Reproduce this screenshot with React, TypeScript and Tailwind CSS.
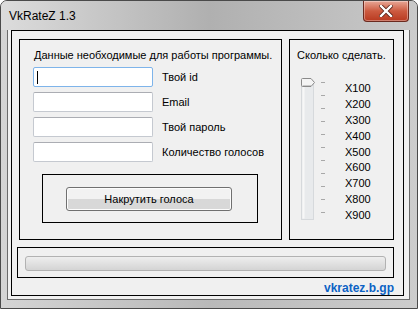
import React from 'react';

const ui = "font-['Liberation_Sans',Arial,sans-serif]";

const fields = ['Твой id', 'Email', 'Твой пароль', 'Количество голосов'];
const amounts = ['X100', 'X200', 'X300', 'X400', 'X500', 'X600', 'X700', 'X800', 'X900'];

const TextBox: React.FC<{ focused?: boolean }> = ({ focused }) => (
  <div
    className={
      'relative w-[120px] h-[20px] bg-white border rounded-[2px] ' +
      (focused ? 'border-[#7eb4ea] bg-[#fcfeff]' : 'border-[#c5c9d0] border-t-[#abadb3]')
    }
  >
    {focused && <div className="absolute left-[3px] top-[3px] w-px h-[13px] bg-black" />}
  </div>
);

const Slider: React.FC = () => (
  <svg width="28" height="144" viewBox="0 0 28 144" className="shrink-0">
    <rect x="0.5" y="3.5" width="12" height="138" fill="#e8eaec" stroke="#d6d9dc" />
    <rect x="1.5" y="4.5" width="2" height="136" fill="#f7f7f7" />
    <path d="M0.5 1.5 Q0.5 0.5 1.5 0.5 H10 L13.5 4.5 L10 8.5 H1.5 Q0.5 8.5 0.5 7.5 Z" fill="#f4f4f4" stroke="#8a8a8a" />
    <path d="M1.5 7.5 H10" stroke="#c9c9c9" />
    {[4, 17, 30, 43, 56, 69, 82, 95, 108, 121, 134].map((y) => (
      <rect key={y} x="20" y={y} width="4" height="1" fill="#a8a8a8" />
    ))}
  </svg>
);

const App: React.FC = () => {
  return (
    <div className={`w-[418px] h-[309px] bg-white ${ui}`}>
      <div className="w-full h-full flex flex-col rounded-t-[7px] border border-[#4a4a4a] bg-gradient-to-r from-[#d4d4d4] via-[#b9b9b9] to-[#cdcdcd] overflow-hidden">
        {/* title bar */}
        <div className="h-[29px] shrink-0 flex items-start justify-between bg-gradient-to-r from-[#dcdcdc] via-[#b0b0b0] to-[#c9c9c9]">
          <span className="pl-[8px] pt-[8px] text-[12px] leading-[14px] text-black">VkRateZ 1.3</span>
          <div className="mr-[8px] w-[46px] h-[21px] flex items-center justify-center rounded-b-[4px] border border-t-0 border-[#6b2a1f] bg-gradient-to-b from-[#e7a796] via-[#cc5a40] to-[#b8391f] shadow-[inset_0_0_0_1px_rgba(255,255,255,0.35)]">
            <svg width="14" height="12" viewBox="0 0 14 12">
              <path d="M2 1 L12 11 M12 1 L2 11" stroke="#5a2318" strokeWidth="4" strokeLinecap="square" />
              <path d="M2 1 L12 11 M12 1 L2 11" stroke="#ffffff" strokeWidth="2.4" strokeLinecap="square" />
            </svg>
          </div>
        </div>

        {/* client area */}
        <div className="ml-[6px] mr-[7px] h-[270px] border border-[#6a6a6a] border-t-0 bg-[#f0f0f0] pl-[3px] pr-[5px] pb-[3px]">
          <div className="h-full border border-black pl-[5px] pr-[9px] pt-[8px] flex flex-col">
            <div className="flex gap-[7px] ml-[2px]">
              {/* left group */}
              <div className="w-[263px] h-[201px] border border-black pl-[13px] pt-[9px] flex flex-col">
                <div className="pl-[1px] text-[11px] leading-[13px] text-black">
                  Данные необходимые для работы программы.
                </div>
                <div className="mt-[5px] flex flex-col gap-[5px]">
                  {fields.map((f, i) => (
                    <div key={f} className="flex items-center gap-[9px]">
                      <TextBox focused={i === 0} />
                      <span className="text-[11px] leading-[13px] text-black">{f}</span>
                    </div>
                  ))}
                </div>
                <div className="mt-[12px] ml-[9px] w-[216px] h-[49px] border border-black pl-[23px] pt-[11px]">
                  <button className="w-[166px] h-[24px] rounded-[3px] border border-[#707070] bg-gradient-to-b from-[#f2f2f2] from-50% to-[#d8d8d8] to-50% text-[11px] text-black shadow-[inset_0_0_0_1px_#fcfcfc]">
                    Накрутить голоса
                  </button>
                </div>
              </div>

              {/* right group */}
              <div className="w-[105px] h-[201px] border border-black pl-[7px] pt-[9px] flex flex-col">
                <div className="text-[11px] leading-[13px] text-black whitespace-nowrap">Сколько сделать.</div>
                <div className="mt-[16px] ml-[4px] flex">
                  <Slider />
                  <div className="ml-[16px] mt-[4px] flex flex-col gap-[2.9px]">
                    {amounts.map((a) => (
                      <span key={a} className="text-[11px] leading-[13px] text-black">{a}</span>
                    ))}
                  </div>
                </div>
              </div>
            </div>

            {/* progress */}
            <div className="mt-[7px] w-[377px] h-[33px] border border-black pl-[7px] pt-[8px]">
              <div className="w-[361px] h-[15px] rounded-[3px] border border-[#b2b2b2] bg-gradient-to-b from-[#eeeeee] to-[#d4d4d4]" />
            </div>

            <div className="mt-[3px] w-[377px] flex justify-end">
              <span className="text-[12px] leading-[14px] font-bold text-[#0c62c4]">vkratez.b.gp</span>
            </div>
          </div>
        </div>
      </div>
    </div>
  );
};

export default App;
